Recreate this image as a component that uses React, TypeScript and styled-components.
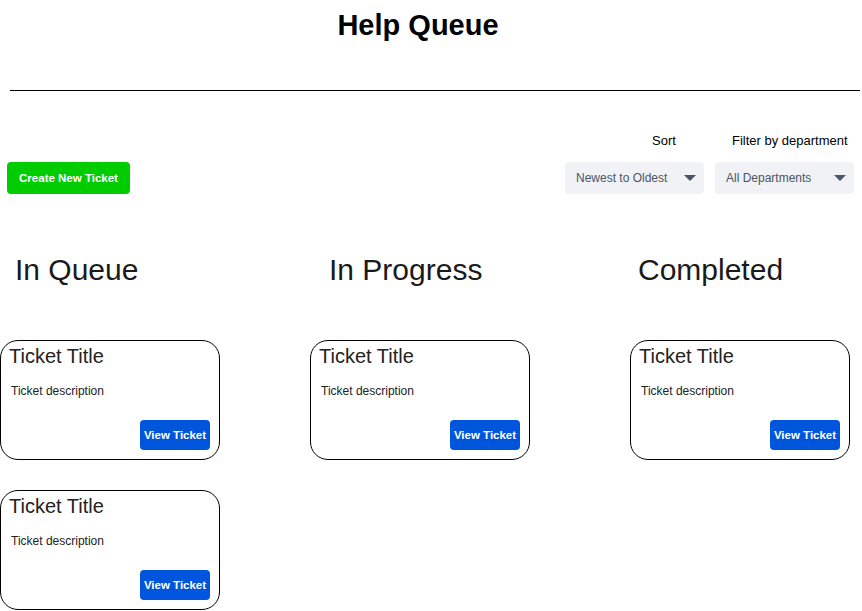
import styled, { createGlobalStyle } from "styled-components";

const GlobalStyle = createGlobalStyle`
    body {
        margin: 0;
        background: #ffffff;
        font-family: "Liberation Sans", Arial, sans-serif;
        color: #000000;
    }
`;

const Page = styled.div`
    width: 862px;
`;

const Title = styled.h1`
    margin: 0;
    padding: 7px 26px 0 0;
    height: 46px;
    text-align: center;
    font-size: 29px;
    font-weight: 700;
    line-height: 36px;
`;

const Rule = styled.div`
    margin: 37px 2px 0 10px;
    height: 1px;
    background: #000000;
`;

const Toolbar = styled.div`
    display: flex;
    justify-content: space-between;
    align-items: flex-end;
    padding: 0 8px 0 7px;
    margin-top: 42px;
`;

const CreateButton = styled.button`
    width: 123px;
    height: 32px;
    border: none;
    border-radius: 4px;
    background: #00cc00;
    color: #ffffff;
    font-family: "Liberation Sans", Arial, sans-serif;
    font-size: 11.5px;
    font-weight: 700;
    padding: 0;
    cursor: pointer;
`;

const Filters = styled.div`
    display: flex;
    gap: 11px;
`;

const FilterGroup = styled.div`
    display: flex;
    flex-direction: column;
`;

const FilterLabel = styled.span<{ $offset: number }>`
    font-size: 13px;
    line-height: 15px;
    margin: 0 0 14px ${(p) => p.$offset}px;
`;

const Select = styled.div`
    width: 139px;
    height: 32px;
    box-sizing: border-box;
    display: flex;
    align-items: center;
    justify-content: space-between;
    padding: 0 8px 0 11px;
    border-radius: 4px;
    background: #f0f2f5;
    color: #4b5563;
    font-size: 12px;
`;

const Caret = styled.span`
    width: 0;
    height: 0;
    border-left: 6px solid transparent;
    border-right: 6px solid transparent;
    border-top: 6px solid #4b5563;
`;

const Board = styled.div`
    display: grid;
    grid-template-columns: 310px 320px 1fr;
    margin-top: 59px;
`;

const Column = styled.div`
    display: flex;
    flex-direction: column;
    gap: 30px;
`;

const ColumnTitle = styled.h2<{ $indent: number }>`
    margin: 0 0 53px ${(p) => p.$indent}px;
    font-size: 30px;
    font-weight: 400;
    line-height: 34px;
    color: #1a1a1a;
`;

const Card = styled.div`
    width: 220px;
    height: 120px;
    box-sizing: border-box;
    border: 1px solid #000000;
    border-radius: 18px;
    padding: 3px 9px 9px 8px;
    display: flex;
    flex-direction: column;
`;

const CardTitle = styled.div`
    font-size: 20px;
    line-height: 24px;
    color: #222222;
`;

const CardText = styled.div`
    margin: 16px 0 0 2px;
    font-size: 12px;
    line-height: 14px;
    color: #222222;
`;

const ViewButton = styled.button`
    margin-top: auto;
    align-self: flex-end;
    width: 70px;
    height: 30px;
    border: none;
    border-radius: 4px;
    background: #0055dd;
    color: #ffffff;
    font-family: "Liberation Sans", Arial, sans-serif;
    font-size: 11.5px;
    font-weight: 700;
    padding: 0;
    cursor: pointer;
`;

const columns = [
    { name: "In Queue", indent: 15, tickets: 2 },
    { name: "In Progress", indent: 19, tickets: 1 },
    { name: "Completed", indent: 8, tickets: 1 },
];

function Ticket() {
    return (
        <Card>
            <CardTitle>Ticket Title</CardTitle>
            <CardText>Ticket description</CardText>
            <ViewButton>View Ticket</ViewButton>
        </Card>
    );
}

export default function App() {
    return (
        <Page>
            <GlobalStyle />
            <Title>Help Queue</Title>
            <Rule />
            <Toolbar>
                <CreateButton>Create New Ticket</CreateButton>
                <Filters>
                    <FilterGroup>
                        <FilterLabel $offset={87}>Sort</FilterLabel>
                        <Select>
                            Newest to Oldest
                            <Caret />
                        </Select>
                    </FilterGroup>
                    <FilterGroup>
                        <FilterLabel $offset={17}>Filter by department</FilterLabel>
                        <Select>
                            All Departments
                            <Caret />
                        </Select>
                    </FilterGroup>
                </Filters>
            </Toolbar>
            <Board>
                {columns.map((col) => (
                    <div key={col.name}>
                        <ColumnTitle $indent={col.indent}>{col.name}</ColumnTitle>
                        <Column>
                            {Array.from({ length: col.tickets }).map((_, i) => (
                                <Ticket key={i} />
                            ))}
                        </Column>
                    </div>
                ))}
            </Board>
        </Page>
    );
}
